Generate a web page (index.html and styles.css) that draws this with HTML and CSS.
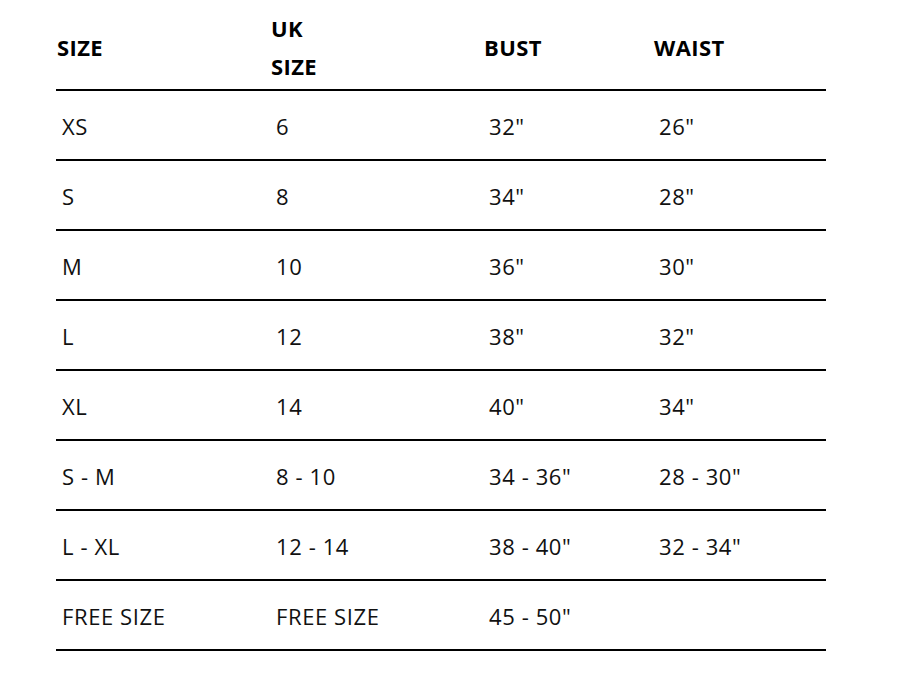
FILE: index.html
```html
<!DOCTYPE html>
<html>
<head>
<meta charset="utf-8">
<link rel="stylesheet" href="styles.css">
</head>
<body>
<table class="size-table">
  <colgroup>
    <col class="c1"><col class="c2"><col class="c3"><col class="c4">
  </colgroup>
  <thead>
    <tr><th>SIZE</th><th>UK<br>SIZE</th><th>BUST</th><th>WAIST</th></tr>
  </thead>
  <tbody>
    <tr><td>XS</td><td>6</td><td>32"</td><td>26"</td></tr>
    <tr><td>S</td><td>8</td><td>34"</td><td>28"</td></tr>
    <tr><td>M</td><td>10</td><td>36"</td><td>30"</td></tr>
    <tr><td>L</td><td>12</td><td>38"</td><td>32"</td></tr>
    <tr><td>XL</td><td>14</td><td>40"</td><td>34"</td></tr>
    <tr><td>S - M</td><td>8 - 10</td><td>34 - 36"</td><td>28 - 30"</td></tr>
    <tr><td>L - XL</td><td>12 - 14</td><td>38 - 40"</td><td>32 - 34"</td></tr>
    <tr><td>FREE SIZE</td><td>FREE SIZE</td><td>45 - 50"</td><td></td></tr>
  </tbody>
</table>
</body>
</html>
```
FILE: styles.css
```css
html, body {
  margin: 0;
  background: #fff;
}
body {
  padding: 9px 0 0 56px;
  font-family: "Open Sans", Lato, sans-serif;
  color: #111;
}
.size-table {
  border-collapse: collapse;
  width: 770px;
  table-layout: fixed;
}
.c1 { width: 214px; }
.c2 { width: 213px; }
.c3 { width: 170px; }
.c4 { width: 173px; }
.size-table th {
  text-align: left;
  font-weight: 700;
  font-size: 22px;
  letter-spacing: 0.4px;
  line-height: 38px;
  padding: 0 0 4px 1px;
  border-bottom: 2px solid #000;
  color: #000;
  vertical-align: middle;
}
.size-table td {
  font-size: 22px;
  letter-spacing: 0.6px;
  height: 68px;
  padding: 2px 0 0 6px;
  box-sizing: border-box;
  border-bottom: 2px solid #000;
  vertical-align: middle;
}
.size-table tbody tr { height: 70px; }
```
